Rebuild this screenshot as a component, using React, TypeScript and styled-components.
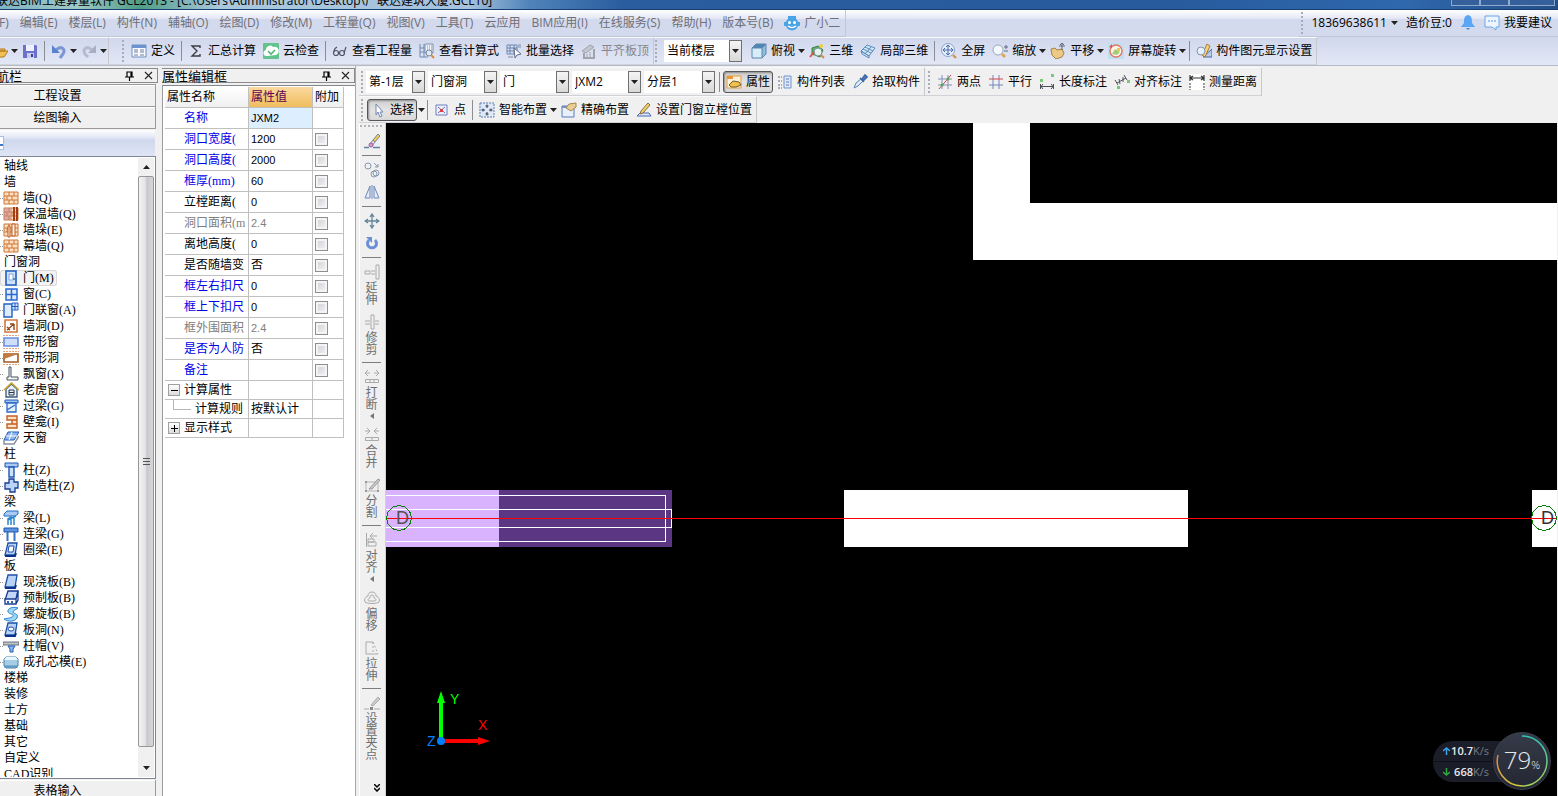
import React from 'react';
import styled, { createGlobalStyle, css } from 'styled-components';

const UI_FONT = '"Open Sans", "Noto Sans CJK SC", sans-serif';
const TREE_FONT = '"Liberation Serif", "Noto Sans CJK SC", serif';

const GlobalStyle = createGlobalStyle`
  *, *::before, *::after { box-sizing: border-box; }
  body { margin: 0; background: #f0f0f0; font: 12px/16px ${UI_FONT}; color: #000; overflow: hidden; }
  button { font: inherit; color: inherit; background: none; border: 0; padding: 0; margin: 0; white-space: nowrap; }
  svg { display: block; flex: none; }
`;

/* ---------- icons, all on a 16 x 16 grid ---------- */

const slab = (
  <>
    <path d="M5 1h9l-2 12H2z" fill="#b9d2f7" stroke="#1c4fa8" strokeWidth="1.3" />
    <path d="M2 14h10l1-3" fill="none" stroke="#0b3388" strokeWidth="2" />
  </>
);

const bricks = (
  <>
    <path d="M1 2h14v12H1z" fill="#fbe0c4" />
    <path d="M1 2h14v12H1zM1 6h14M1 10h14M6 2v4M11 2v4M4 6v4M9 6v4M6 10v4M11 10v4" fill="none" stroke="#cf7434" />
  </>
);

const ICONS: Record<string, React.ReactNode> = {
  open: <path d="M1 5h5l1 1h6v2H6l-3 6H1zM6 8h10l-4 6H3z" fill="#f3c056" stroke="#b27a1e" />,
  save: (
    <>
      <path d="M1 2h13l1 1v12H1z" fill="#6b72cc" />
      <path d="M4 2h8v6H4z" fill="#eef1fb" />
      <path d="M5 10h7v5H5z" fill="#c8cdea" />
      <path d="M9 11h2v3H9z" fill="#3b419b" />
    </>
  ),
  undo: (
    <>
      <path d="M5 7c5-5 10-1 7 4l-3 4" fill="none" stroke="#7d97d6" strokeWidth="3" />
      <path d="M1 2v8h8z" fill="#5b82cc" />
    </>
  ),
  redo: (
    <>
      <path d="M11 7C6 2 1 6 4 11l3 3" fill="none" stroke="#b5bccf" strokeWidth="3" />
      <path d="M15 2v8H7z" fill="#a7afc4" />
    </>
  ),
  define: (
    <>
      <path d="M1 2h14v12H1z" fill="#f7faff" stroke="#6d8fc0" />
      <path d="M1 2h14v3H1z" fill="#6a93cf" />
      <path d="M3 7h4M3 9h4M3 12h4M9 7h4M9 9h4M9 12h4" stroke="#6d7f9c" />
    </>
  ),
  sigma: <path d="M12 5V3H4l5 5-5 5h8v-2" fill="none" stroke="#3c3c44" strokeWidth="1.4" />,
  cloudCheck: (
    <>
      <rect width="16" height="16" rx="1" fill="#62c48c" />
      <path d="M4 13a3 3 0 0 1-1-6 4 4 0 0 1 7-3 4 4 0 0 1 3 8z" fill="#fff" />
      <path d="m5 8 3 3 4-4" fill="none" stroke="#4db57a" strokeWidth="1.6" />
    </>
  ),
  glasses: (
    <g fill="none" stroke="#4e5666" strokeWidth="1.2">
      <circle cx="4" cy="10" r="2.5" />
      <circle cx="10" cy="10" r="2.5" />
      <path d="M2 9c0-3 1-4 3-5M12 10l2-6" />
    </g>
  ),
  formula: (
    <>
      <path d="M1 1v13h8M1 5h4M1 9h4M5 1v13" fill="none" stroke="#6a86b5" />
      <path d="M6 1h8v9H6z" fill="#eef2fa" stroke="#7b8dab" />
      <path d="M8 3h5M8 5h5M8 7h5" stroke="#8293b5" strokeDasharray="1 1" />
      <circle cx="10" cy="10" r="3" fill="#dce9f8" stroke="#7d8794" />
      <path d="m12 12 3 3" stroke="#d88b3c" strokeWidth="2" />
    </>
  ),
  batch: (
    <>
      <path d="M1 2h10v9H1zM1 5h10M1 8h10M4 2v9M8 2v9" fill="none" stroke="#6b86b3" />
      <path d="M8 5l7 6-4 1-2 3z" fill="#fff" stroke="#5d6d89" />
      <path d="M12 2h3M12 4h3M2 14h5" stroke="#7f8ca3" />
    </>
  ),
  alignTop: (
    <>
      <path d="m1 8 8-6 4 2-8 6z" fill="#c3c6cd" stroke="#9fa3ab" />
      <path d="M3 10v5h10V6" fill="none" stroke="#9fa3ab" strokeWidth="2" />
      <path d="M6 11v3M9 9v5" stroke="#9fa3ab" />
    </>
  ),
  cube: (
    <>
      <path d="M1 5h10v10H1z" fill="#d9edf9" />
      <path d="m1 5 4-4h10l-4 4z" fill="#4f86b4" />
      <path d="m11 5 4-4v10l-4 4z" fill="#8fbddc" />
      <path d="M1 5h10v10H1zM1 5l4-4h10v10l-4 4M11 5l4-4" fill="none" stroke="#5b87ad" />
    </>
  ),
  view3d: (
    <>
      <path d="M3 5 9 3l5 4-3 7-8-3z" fill="#5fae62" stroke="#3c7f49" />
      <circle cx="12" cy="3" r="2" fill="#f1cf3a" />
      <circle cx="9" cy="9" r="4" fill="#e5f2ef" stroke="#6e9992" />
      <path d="m12 12 3 3" stroke="#d88a3e" strokeWidth="2" />
      <path d="m1 14 4-5" stroke="#d2594b" strokeWidth="2" />
    </>
  ),
  partial3d: (
    <>
      <path d="m1 8 6-6 8 3-6 8z" fill="#cfe4f5" stroke="#5b8cba" />
      <path d="m3 6 8 4M5 4l8 4M5 11l6-7M1 8l8 5v2l-7-4z" fill="none" stroke="#5b8cba" />
    </>
  ),
  fullscreen: (
    <>
      <circle cx="7" cy="7" r="6.500" fill="#e4edfa" stroke="#8ea4c8" />
      <path d="M7 2v10M2 7h10M5 4l2-2 2 2M5 10l2 2 2-2M4 5 2 7l2 2M10 5l2 2-2 2" fill="none" stroke="#4a6da5" />
      <path d="m12 12 3 3" stroke="#d79445" strokeWidth="2.4" />
    </>
  ),
  zoom: (
    <>
      <circle cx="6" cy="7" r="5" fill="#f4f8fd" stroke="#9aa6b8" />
      <path d="m10 11 3 3" stroke="#e0a54a" strokeWidth="2.6" />
      <path d="M12 4h4M14 2v4M12 8h4" stroke="#5b6a80" />
    </>
  ),
  hand: (
    <>
      <path d="M1 6l4-1 2 2 5-1 2 4-2 4-6 2-4-4z" fill="#ecc986" stroke="#a88343" />
      <path d="M12 0v7M9 3h6M10 2l2-2 2 2" fill="none" stroke="#5a6a80" />
    </>
  ),
  rotateView: (
    <>
      <path d="M0 0h16v16H0z" fill="#bfe0f0" />
      <circle cx="8" cy="8" r="6" fill="#fdf5e9" stroke="#e2766a" strokeWidth="1.4" />
      <path d="m4 11 3-5 5 3-3 3z" fill="#9fce75" />
      <path d="M9 5h3v3H9z" fill="#f0c64a" />
      <path d="M1 4l3-3v4z" fill="#e2564a" />
    </>
  ),
  display: (
    <>
      <path d="M7 14h9V6z" fill="#b8cbee" stroke="#4865a5" />
      <path d="m6 12 5-11 3 2-5 11z" fill="#f5d27a" stroke="#a97a35" />
      <circle cx="5" cy="8" r="4" fill="#e6f0fa" stroke="#8593a8" />
    </>
  ),
  attr: (
    <>
      <path d="M1 2h14v12H1z" fill="#fdf0d8" stroke="#e29a45" />
      <path d="M1 2h6v3H1z" fill="#e99a38" />
      <path d="m3 11 4-4 6 1 2 3-5 2H5z" fill="#f0c24c" stroke="#6f5a2c" />
    </>
  ),
  list: (
    <>
      <path d="M7 2h7v12H7z" fill="#dce8fa" stroke="#7592c8" />
      <path d="M9 5h3M9 8h3M9 11h3" stroke="#5b7fc0" />
      <path d="M1 3h4M1 7h4M1 11h4M1 14h4" stroke="#8b97ab" strokeDasharray="2 1" strokeWidth="1.500" />
    </>
  ),
  dropper: (
    <>
      <path d="m2 14 2-5 5-4 2 2-5 5z" fill="#dcebfa" stroke="#5e85b8" />
      <path d="m8 4 4 4M10 5l3-4 2 2-4 4z" fill="#5583c0" stroke="#3f6aa8" strokeWidth="1.600" />
    </>
  ),
  twoPoint: (
    <>
      <path d="M1 5h14M1 11h14M5 1v14M11 1v14" stroke="#8390bb" />
      <path d="M2 15 14 1" stroke="#c8424c" />
      <circle cx="5" cy="11" r="1.5" fill="#54a756" />
      <circle cx="11" cy="5" r="1.5" fill="#54a756" />
    </>
  ),
  parallel: (
    <>
      <path d="M5 1v14M11 1v14M1 11h14" stroke="#7585b8" />
      <path d="M1 5h14" stroke="#d4444c" />
    </>
  ),
  lengthDim: (
    <>
      <path d="M1 5h3v3H1zM12 0h3v3h-3z" fill="#79c77a" />
      <path d="M1.500 10v5M14.500 10v5M1 12.500h14M4 10l-2 2.500L4 15M12 10l2 2.500-2 2.500" fill="none" stroke="#4d5157" />
    </>
  ),
  alignDim: (
    <>
      <path d="m1 6 3 5M10 1l3 5M3 9l9-5M5 5l1 5M9 3v5" fill="none" stroke="#4d5157" />
      <path d="M3 12h3v3H3zM13 6h3v3h-3z" fill="#79c77a" />
    </>
  ),
  measure: (
    <>
      <path d="M0 0h16v16H0z" fill="#fff" />
      <path d="M1 1v6M15 1v6M1 4h14M4 2 1 4l3 2M12 2l3 2-3 2" fill="none" stroke="#333" strokeWidth="1.2" />
      <path d="M1 9v7M15 9v7" stroke="#333" strokeDasharray="2 1" />
    </>
  ),
  cursor: <path d="M6 2v11l2-3 2 5 2-1-2-4h3z" fill="#fff" stroke="#7189b2" />,
  point: (
    <>
      <path d="M2 3h11v10H2z" fill="#eef1fc" stroke="#6f7fc0" />
      <path d="m4 5 7 6M11 5l-7 6" stroke="#6a73b0" />
      <path d="M6 7h3v3H6z" fill="#d6434b" />
    </>
  ),
  smart: (
    <>
      <path d="M0 1h15v14H0z" fill="#dfe8f7" />
      <path d="M1 1h14v14H1z" fill="none" stroke="#5f7cae" strokeDasharray="2 1" />
      <path d="M8 2.500V6M8 10v3.500M2.500 8H6M10 8h3.500M6.500 4h3M6.500 12h3M4 6.500v3M12 6.500v3" stroke="#333c4d" />
    </>
  ),
  precise: (
    <>
      <path d="M1 4h12v11H1z" fill="#e8f0fc" stroke="#587bbd" />
      <path d="M1 4h12v2H1z" fill="#6f93d0" />
      <path d="m5 6 3-4 7-1v4l-5 4z" fill="#e9cd92" stroke="#a78950" />
    </>
  ),
  pencil: (
    <>
      <path d="M4 11h9l2 3H1z" fill="#dfe8fb" stroke="#4967b5" />
      <path d="m5 9 7-8 2 2-7 8-3 1z" fill="#f0d36d" stroke="#8e6a3b" />
    </>
  ),
  robot: (
    <>
      <circle cx="8" cy="9" r="6.5" fill="#4aa5e6" />
      <path d="M0 7h3v4H0zM13 7h3v4h-3zM4 1h8v3H4z" fill="#4aa5e6" />
      <circle cx="5.5" cy="7.5" r="1.5" fill="#fff" />
      <circle cx="10.500" cy="7.5" r="1.5" fill="#fff" />
      <path d="M4 11q4 3 8 0" fill="none" stroke="#fff" strokeWidth="1.4" />
    </>
  ),
  bell: (
    <>
      <path d="M8 0c4 1 4 4 4 8l3 4H1l3-4c0-4 0-7 4-8z" fill="#58a6f5" />
      <path d="M6 13h4l-2 2z" fill="#3f86d2" />
    </>
  ),
  chat: (
    <>
      <path d="M1 1h14v11h-3v3l-4-3H1z" fill="#eef5fe" stroke="#6aa6e6" />
      <path d="M4 6h8" stroke="#4c95e4" strokeDasharray="2 1" />
    </>
  ),
  brush: (
    <>
      <path d="m9 7 5-6 2 2-5 6z" fill="#f0cb55" stroke="#7c8796" />
      <path d="m6 11 3-4 2 2-3 4z" fill="#dbe3ee" stroke="#7c8796" />
      <circle cx="7" cy="12" r="2" fill="#d79bd0" stroke="#9c5f9c" />
      <path d="M0 14.500h5M9 14.500h7" stroke="#5d82a8" strokeWidth="1.500" />
    </>
  ),
  copy: (
    <g fill="none" stroke="#8598b2">
      <circle cx="4" cy="4" r="3" />
      <circle cx="10" cy="12" r="3" />
      <circle cx="12" cy="11" r="3" />
      <path d="m10 1 4 4M14 2v3h-3" />
    </g>
  ),
  mirror: <path d="M6 2v12H1zM10 2v12h5zM8 1v14" fill="#e3ebf8" stroke="#6d88bb" />,
  move: <path d="M8 1v14M1 8h14M6 4l2-3 2 3M6 12l2 3 2-3M4 6 1 8l3 2M12 6l3 2-3 2" fill="none" stroke="#64859a" strokeWidth="1.3" />,
  rotate: (
    <>
      <path d="M5 5a4.500 4.500 0 1 0 6 0" fill="none" stroke="#6b8fd6" strokeWidth="3" />
      <path d="M2 2h6v6z" fill="#6b8fd6" />
    </>
  ),
  extend: <path d="M12 1h3v14h-3zM1 7h5v3H1zM7 7h4M7 10h4" fill="none" stroke="#aaa" />,
  trim: <path d="M7 1h3v14H7zM1 7h5M1 10h5M11 7h4M11 10h4" fill="none" stroke="#aaa" />,
  split: <path d="M1.500 10.500h13v3h-13zM6 11v3M10 11v3M1 4h5M4 1 1 4l3 3M10 4h5M12 1l3 3-3 3" fill="none" stroke="#aaa" />,
  merge: <path d="M1.500 10.500h13v3h-13zM8 11v3M1 4h5M3 1l3 3-3 3M10 4h5M13 1l-3 3 3 3" fill="none" stroke="#aaa" />,
  cut: (
    <>
      <path d="M2 5h12v9H2z" fill="none" stroke="#b5b5b5" />
      <path d="M1 13h2v2H1zM13 13h2v2h-2zM1 4h2v2H1z" fill="#999" />
      <path d="m5 12 9-10 2 1-8 9z" fill="#ccc" stroke="#999" />
    </>
  ),
  align: <path d="M2.500 1v14M4 7h6v3H4zM4 10h8v4H4zM6 4h7M9 1 6 4l3 3" fill="none" stroke="#aaa" />,
  offset: (
    <g fill="none" stroke="#aaa">
      <path d="M8 2c3 0 4 2 4 4 3 1 4 3 3 6-2 2-12 2-14 0-1-3 0-5 3-6 0-2 1-4 4-4z" />
      <path d="M8 5c2 0 2 2 2 3 3 1 2 3 1 3H5c-1 0-2-2 1-3 0-1 0-3 2-3z" />
    </g>
  ),
  stretch: (
    <>
      <path d="M9 2H2v12h12" fill="none" stroke="#aaa" />
      <path d="m9 2 5 12M9 2v12" fill="none" stroke="#aaa" strokeDasharray="2 2" />
    </>
  ),
  grip: (
    <>
      <path d="m7 10 7-8 2 2-7 7z" fill="#ccc" stroke="#aaa" />
      <path d="M0 14h5M10 14h6" stroke="#aaa" />
      <path d="M6 12h3v3H6z" fill="#888" />
    </>
  ),
  wall: bricks,
  insulation: (
    <>
      {bricks}
      <path d="M1 2h8v12H1z" fill="#c9898a" fillOpacity=".6" />
      <path d="M11 1v14M14 1v14" stroke="#a33c12" strokeWidth="2" />
    </>
  ),
  pier: (
    <>
      {bricks}
      <path d="M5 4h2v11H5zM9 2h3v12H9z" fill="#fff5ea" stroke="#b85a20" />
    </>
  ),
  door: (
    <>
      <path d="M3 1h10v14H3z" fill="#cfe2fb" stroke="#1f5cc0" strokeWidth="1.6" />
      <path d="M6 4h4v6H6z" fill="#fff" stroke="#7fa5df" />
      <path d="M11 8v2" stroke="#123a86" />
    </>
  ),
  window: <path d="M3 3h11v11H3zM8.500 3v11M3 8.500h11" fill="#dcebfd" stroke="#2a69cf" strokeWidth="1.5" />,
  doorWindow: (
    <>
      <path d="M1 2h8v13H1z" fill="#dcebfd" stroke="#2460c4" strokeWidth="1.4" />
      <path d="M9 1h6v7H9zM12 1v7M9 4.500h6" fill="#cfe2fb" stroke="#2460c4" />
    </>
  ),
  wallHole: (
    <>
      <path d="M2 2h12v12H2z" fill="#fff" stroke="#d0793b" strokeWidth="1.6" />
      <path d="m4 12 7-6M11 6v6M7 6h4M4 9l3 3" fill="none" stroke="#8f4a1b" strokeWidth="1.4" />
    </>
  ),
  stripWindow: (
    <>
      <path d="M0 1.500h16M0 14.500h16" stroke="#e6a078" strokeDasharray="2 1" />
      <path d="M1 4h14v8H1z" fill="#cfdffb" stroke="#6a8fe0" strokeWidth="1.6" />
    </>
  ),
  stripHole: (
    <>
      <path d="M0 1.500h16M0 14.500h16" stroke="#e6a078" strokeDasharray="2 1" />
      <path d="M1 4h14v8H1z" fill="#fff" stroke="#a45a26" strokeWidth="1.6" />
      <path d="M1 4h14L1 9z" fill="#c27a42" />
    </>
  ),
  bay: <path d="M6 1h2v10h7v3H4v-3h2z" fill="#f2f5fa" stroke="#49505e" />,
  dormer: (
    <>
      <path d="M3 7v8h11V7L8.500 2z" fill="#e9f3fc" stroke="#3e5878" strokeWidth="1.3" />
      <path d="M1 8 8.500 1 16 8" fill="none" stroke="#c9a62f" strokeWidth="1.6" />
      <path d="M6 8h5v5H6zM6 10.500h5" fill="none" stroke="#26374d" />
    </>
  ),
  lintel: (
    <>
      <path d="M2 2h13v3H2z" fill="#9ec2f2" stroke="#1f5bb8" />
      <path d="M4 5h9v9H4zM4 12l8-5" fill="#e3effd" stroke="#2b69c6" strokeWidth="1.3" />
    </>
  ),
  niche: <path d="M4 2h10v12H4v-4h5V6H4zM9 6h5M9 10h5" fill="#fbe0c4" stroke="#c15f21" strokeWidth="1.4" />,
  skylight: (
    <>
      <path d="M5 2h11l-5 8H1z" fill="#8fb7ee" stroke="#1f5bb8" />
      <path d="M3 6h11M9 2 6 10" stroke="#fff" />
      <path d="M1 10v4h10l5-8" fill="none" stroke="#8a929e" strokeWidth="1.5" />
    </>
  ),
  column: (
    <>
      <path d="M2 1h13v4H2z" fill="#a9caf5" stroke="#1c57b4" />
      <path d="M6 5h5v10H6z" fill="#cfe1fa" stroke="#1c57b4" strokeWidth="1.4" />
    </>
  ),
  structColumn: <path d="M6 1h5v3h4v6h-3v4H7v-3H2V5h4z" fill="#bcd4f8" stroke="#173f91" strokeWidth="1.3" />,
  beam: (
    <>
      <path d="M1 4 4 1h11v3l-3 2H1z" fill="#a9caf5" stroke="#1f6cc0" />
      <path d="M5 15V9l3-2v8M11 15V6M5 10l8-4" fill="none" stroke="#2b86cf" strokeWidth="1.5" />
    </>
  ),
  linkBeam: (
    <>
      <path d="M1 2h14v4H1z" fill="#5d93de" stroke="#1f57ae" />
      <path d="M4.500 6v9M11.500 6v9" stroke="#3b72c4" strokeWidth="2" />
    </>
  ),
  ringBeam: (
    <>
      {slab}
      <path d="M6 4h5l-1 6H5z" fill="#fff" stroke="#1c4fa8" />
    </>
  ),
  slab,
  precast: (
    <>
      <path d="M5 1h10l-2 9H2z" fill="#c3d6f6" stroke="#1a3b92" strokeWidth="1.3" />
      <path d="M2 9h11v5H2zM13 9l2-8v9l-2 4" fill="#fff" stroke="#1a3b92" strokeWidth="1.3" />
      <path d="M4 11h2v2H4zM8 11h2v2H8z" fill="#2b5cc0" />
    </>
  ),
  spiral: <path d="M15 2C9 0 4 3 5 6c1 2 6 2 5 4s-5 2-9 3c4 3 11 3 13-1 2-5-4-4-4-6 0-1 2-2 5-4z" fill="#9fd4f5" stroke="#2b84cf" />,
  slabHole: (
    <>
      {slab}
      <ellipse cx="8" cy="7" rx="3" ry="2" fill="#fff" stroke="#1c4fa8" />
    </>
  ),
  cap: (
    <>
      <path d="M0 4h16v3H0z" fill="#bfc3c9" stroke="#6b7078" />
      <path d="M5 8h7l-2 3v3H7v-3z" fill="#8fb7ee" stroke="#1f5bb8" />
    </>
  ),
  coreMold: (
    <>
      <path d="M3 3h10l2 2v7l-2 2H3l-2-2V5z" fill="#a5cde6" stroke="#487fa6" />
      <path d="M3 3h10l2 3H1z" fill="#e8f5fc" />
      <path d="M1 12.500h14" stroke="#5f97bd" strokeWidth="2" />
    </>
  ),
};

const Icon = ({ name }: { name: string }) => (
  <svg width="16" height="16" viewBox="0 0 16 16" aria-hidden="true">{ICONS[name]}</svg>
);

const DownArrow = () => (
  <svg width="7" height="4" viewBox="0 0 7 4" aria-hidden="true"><path d="M0 0h7L3.500 4z" fill="#222" /></svg>
);

/* ---------- frame ---------- */

const Shell = styled.div`
  display: flex;
  flex-direction: column;
  height: 100vh;
  overflow: hidden;
`;

const TitleBar = styled.header`
  display: flex;
  align-items: flex-end;
  justify-content: space-between;
  height: 10px;
  flex: none;
  overflow: hidden;
  white-space: pre;
  border-bottom: 1px solid #163f74;
  background: linear-gradient(90deg, #7fb3c4 0, #9fc9c4 5%, #4f9c86 9%, #a9c7dc 14%, #a7c3dd 30%, #4f83b9 34%, #2a5d9f 40%, #275b9e 75%, #2f68ad 90%, #244f88 100%);
`;

const TitleText = styled.span`
  margin-left: -4px;
  line-height: 16px;
`;

const WindowButtons = styled.div`
  display: flex;
  flex: none;
  margin-right: 3px;
`;

const WindowButton = styled.button<{ $wide?: boolean }>`
  width: ${p => (p.$wide ? 46 : 29)}px;
  height: 6px;
  margin-bottom: 3px;
  border: 1px solid #8fa9cc;
  border-top: 0;
  background: #35609b;
`;

const MenuRow = styled.div`
  display: flex;
  justify-content: space-between;
  height: 27px;
  flex: none;
  background: linear-gradient(#fff 0, #e2e6f4 9px, #d3daee 9px, #d3daee 100%);
`;

const MenuBar = styled.nav`
  display: flex;
  align-items: center;
  gap: 11px;
  padding: 0 5px 0 0;
  margin-left: -1px;
  border-right: 1px solid #c2c8d8;
  border-bottom: 1px solid #c2c8d8;
  color: #6f6f76;
`;

const MenuItem = styled.button`
  display: flex;
  align-items: center;
  gap: 4px;
  line-height: 20px;
`;

const Account = styled.div`
  display: flex;
  align-items: center;
  gap: 8px;
  padding: 0 6px 0 2px;
  border-bottom: 1px solid #c2c8d8;
`;

const Grip = styled.span<{ $flat?: boolean }>`
  flex: none;
  ${p => (p.$flat
    ? css`width: 24px; height: 2px; background: repeating-linear-gradient(90deg, #b4b4b8 0 2px, transparent 2px 4px);`
    : css`width: 2px; height: 22px; background: repeating-linear-gradient(#a9adb8 0 2px, transparent 2px 4px);`)}
`;

const ToolRow = styled.div<{ $tone?: 'blue'; $height: number }>`
  display: flex;
  flex: none;
  height: ${p => p.$height}px;
  ${p => p.$tone === 'blue' && css`
    background: linear-gradient(#d0d7ec, #e3e8f6);
    border-bottom: 1px solid #b4bccb;
  `}
`;

const Toolbar = styled.div<{ $gap?: number; $start?: number }>`
  display: flex;
  align-items: center;
  flex: none;
  gap: ${p => p.$gap ?? 7}px;
  padding: 0 4px 0 ${p => p.$start ?? 1}px;
  border-top: 1px solid #fafafc;
  border-right: 1px solid #c6c8ce;
  border-bottom: 1px solid #d0d2d8;
`;

const ToolGroup = styled.div`
  display: flex;
  align-items: center;
  gap: 7px;
  margin-left: 2px;
`;

const ToolButton = styled.button<{ $arrow?: boolean; $pressed?: boolean; $muted?: boolean }>`
  display: flex;
  align-items: center;
  gap: 4px;
  height: 22px;
  flex: none;
  ${p => p.$arrow && css`margin-right: -3px; & > svg:last-child { margin-left: -1px; }`}
  ${p => p.$muted && css`color: #85868d;`}
  ${p => p.$pressed && css`
    padding: 0 2px;
    margin: 0 -3px;
    border: 1px solid #55565a;
    border-radius: 3px;
    background: linear-gradient(#cfcfcf, #e3e3e3 50%, #dadada);
    box-shadow: inset 1px 1px 2px #8d8d8d;
  `}
`;

const DropButton = styled.button`
  height: 22px;
  margin: 0 -4px 0 -3px;
`;

const Sep = styled.span`
  flex: none;
  width: 1px;
  height: 20px;
  margin: 0 -1px;
  background: #8b8d94;
`;

const Picker = styled.label<{ $width: number }>`
  display: flex;
  flex: none;
  width: ${p => p.$width}px;
  height: 22px;
  background: #fff;

  select {
    flex: 1;
    min-width: 0;
    appearance: none;
    border: 0;
    padding: 0 0 0 3px;
    background: none;
    font: inherit;
    color: #000;
  }
`;

const PickerArrow = styled.span`
  display: flex;
  align-items: center;
  justify-content: center;
  width: 13px;
  border: 1px solid #707070;
  background: linear-gradient(#f4f4f4, #d8d8d8);
`;

const Choice = ({ value, width, label }: { value: string; width: number; label: string }) => (
  <Picker $width={width}>
    <select aria-label={label} defaultValue={value}><option>{value}</option></select>
    <PickerArrow><DownArrow /></PickerArrow>
  </Picker>
);

type ToolProps = { icon: string; label?: string; arrow?: boolean; muted?: boolean; pressed?: boolean };
const Tool = ({ icon, label, arrow, muted, pressed }: ToolProps) => (
  <ToolButton type="button" $arrow={arrow} $muted={muted} $pressed={pressed} aria-label={label ?? icon}>
    <Icon name={icon} />
    {label}
    {arrow && <DownArrow />}
  </ToolButton>
);

/* ---------- docked panels ---------- */

const Body = styled.div`
  display: grid;
  grid-template-columns: 158px 198px minmax(0, 1fr);
  grid-template-rows: minmax(0, 1fr);
  flex: 1;
  min-height: 0;
`;

const Dock = styled.section<{ $inset?: boolean }>`
  display: flex;
  flex-direction: column;
  min-height: 0;
  padding: 2px 0 0 ${p => (p.$inset ? 4 : 0)}px;
  overflow: hidden;
  ${p => p.$inset && css`border-right: 1px solid #a6a6ac;`}
`;

const DockHeader = styled.div`
  display: flex;
  align-items: center;
  flex: none;
  height: 15px;
  border: 1px solid #8a8a8a;
  border-left: 0;
  font-size: 13px;
  gap: 10px;
  padding-right: 4px;
  white-space: nowrap;

  h2 { flex: 1; margin: 0; font: inherit; }
`;

const ClippedTitle = styled.h2`
  text-indent: -4px;
`;

const PanelButtons = () => (
  <>
    <button type="button" aria-label="固定">
      <svg width="9" height="10" viewBox="0 0 9 10"><path d="M2 1h5v5H2zM6 1v5M0 6h9M4.500 6v4" fill="none" stroke="#000" strokeWidth="1.2" /></svg>
    </button>
    <button type="button" aria-label="关闭">
      <svg width="9" height="9" viewBox="0 0 9 9"><path d="m1 1 7 7M8 1 1 8" stroke="#222" strokeWidth="1.100" /></svg>
    </button>
  </>
);

const NavButton = styled.button`
  flex: none;
  width: 156px;
  height: 22px;
  padding-right: 40px;
  border: 1px solid #9b9b9b;
  border-width: 0 1px 1px 0;
  box-shadow: inset 0 1px #fff;
  text-align: center;
`;

const NavTop = styled.div`
  display: flex;
  flex-direction: column;
  flex: none;
  width: 156px;
  margin-top: 1px;
  border-top: 1px solid #9b9b9b;
`;

const NavStrip = styled.div`
  display: flex;
  align-items: center;
  flex: none;
  width: 155px;
  height: 26px;
  margin-top: 1px;
  background: linear-gradient(#fff 0, #dfe5f4 8px, #d0d8ed 10px, #dfe5f5 100%);

  &::before { content: ''; width: 4px; height: 14px; border: 1px solid #a8bde3; border-left: 0; background: linear-gradient(#fff 7px, #3d79c4 7px 9px, #fff 9px); }
`;

const TreeBox = styled.div`
  display: flex;
  flex: 1;
  min-height: 0;
  width: 156px;
  border: 1px solid #7f8694;
  border-width: 1px 1px 1px 0;
  background: #fff;
`;

const Tree = styled.ul`
  flex: 1;
  min-width: 0;
  margin: 1px 0;
  padding: 0;
  list-style: none;
  overflow: hidden;
  font-family: ${TREE_FONT};
`;

const TreeRow = styled.li<{ $leaf?: boolean; $active?: boolean }>`
  display: flex;
  align-items: center;
  height: 16px;
  padding-left: ${p => (p.$leaf ? 3 : 4)}px;
  white-space: nowrap;

  button { display: flex; align-items: center; gap: 4px; height: 16px; line-height: 17px; }
  ${p => p.$leaf && css`background: linear-gradient(90deg, #999 1px, transparent 1px 2px, #999 2px 3px, transparent 3px) 0 8px / 3px 1px no-repeat;`}
  ${p => p.$active && css`
    width: 57px;
    border-radius: 3px;
    background: #f3f3f3;
    box-shadow: inset 0 0 0 1px #d8d8d8;
  `}
`;

const ScrollBar = styled.div`
  display: flex;
  flex-direction: column;
  flex: none;
  width: 16px;
  margin: 1px 1px 1px 0;
  background: #f0f0f0;
`;

const ScrollButton = styled.button<{ $down?: boolean }>`
  display: grid;
  place-items: center;
  height: 18px;
  ${p => p.$down && css`margin-top: 12px;`}
  svg { transform: ${p => (p.$down ? 'none' : 'rotate(180deg)')}; }
`;

const Thumb = styled.div`
  display: grid;
  place-items: center;
  flex: 1;
  border: 1px solid #979797;
  border-radius: 2px;
  background: linear-gradient(90deg, #f3f3f3, #e4e4e6 45%, #c9c9cd 55%, #d6d6da);

  &::before { content: ''; width: 7px; height: 8px; background: repeating-linear-gradient(#555 0 1px, transparent 1px 3px); }
`;

const FooterButton = styled(NavButton)`
  margin-top: 1px;
  margin-bottom: -6px;
`;

const TREE: [string, string?][] = [
  ['轴线'], ['墙'], ['墙(Q)', 'wall'], ['保温墙(Q)', 'insulation'], ['墙垛(E)', 'pier'], ['幕墙(Q)', 'wall'],
  ['门窗洞'], ['门(M)', 'door'], ['窗(C)', 'window'], ['门联窗(A)', 'doorWindow'], ['墙洞(D)', 'wallHole'],
  ['带形窗', 'stripWindow'], ['带形洞', 'stripHole'], ['飘窗(X)', 'bay'], ['老虎窗', 'dormer'], ['过梁(G)', 'lintel'],
  ['壁龛(I)', 'niche'], ['天窗', 'skylight'], ['柱'], ['柱(Z)', 'column'], ['构造柱(Z)', 'structColumn'],
  ['梁'], ['梁(L)', 'beam'], ['连梁(G)', 'linkBeam'], ['圈梁(E)', 'ringBeam'], ['板'], ['现浇板(B)', 'slab'],
  ['预制板(B)', 'precast'], ['螺旋板(B)', 'spiral'], ['板洞(N)', 'slabHole'], ['柱帽(V)', 'cap'],
  ['成孔芯模(E)', 'coreMold'], ['楼梯'], ['装修'], ['土方'], ['基础'], ['其它'], ['自定义'], ['CAD识别'],
];

const PropBody = styled.div`
  flex: 1;
  width: 193px;
  margin-top: 2px;
  padding: 1px 0 0 2px;
  border-top: 1px solid #83868c;
  border-left: 1px solid #9b9b9b;
  background: #fff;
`;

const PropTable = styled.table`
  width: 179px;
  table-layout: fixed;
  border-collapse: separate;
  border-spacing: 0;
  font-family: ${TREE_FONT};

  th, td {
    height: 21px;
    padding: 0 0 0 2px;
    border-right: 1px solid #c0c0c0;
    border-bottom: 1px solid #c0c0c0;
    overflow: hidden;
    white-space: nowrap;
    text-align: left;
    font-weight: 400;
    line-height: 16px;
  }
  thead th { background: linear-gradient(#fff, #f0f0f0); }
  thead th:nth-child(2) { background: linear-gradient(#fbd9a0, #f0bd5c); color: #600050; }
`;

const PropRow = styled.tr<{ $tone?: string; $short?: boolean; $indent?: boolean }>`
  && th { padding-left: ${p => (p.$short ? 3 : 19)}px; color: ${p => (p.$tone === 'gray' ? '#808080' : p.$tone === 'blue' ? '#0000e6' : '#000')}; }
  && td { color: ${p => (p.$tone === 'gray' ? '#808080' : '#000')}; }
  ${p => p.$short && css`&& th, && td { height: 19px; }`}
  ${p => p.$indent && css`&& th { padding-left: 8px; }`}
`;

const ValueCell = styled.td<{ $active?: boolean; $latin?: boolean }>`
  ${p => p.$active && css`background: #ddeeff;`}
  ${p => p.$latin && css`font-family: "Liberation Sans", sans-serif; font-size: 11px;`}
`;

const TreeCell = styled.span`
  display: flex;
  align-items: center;
  gap: 4px;
`;

const Branch = styled.span`
  width: 18px;
  height: 10px;
  margin-top: -9px;
  border: 1px solid #b5b5b5;
  border-width: 0 0 1px 1px;
`;

const Expander = styled.button`
  display: grid;
  place-items: center;
  width: 12px;
  height: 12px;
  border: 1px solid #a0a0a0;
  background: linear-gradient(#fff, #dcdcdc);
`;

const Tick = styled.input.attrs({ type: 'checkbox' })`
  display: block;
  appearance: none;
  width: 13px;
  height: 13px;
  margin: 1px 0 0;
  border: 1px solid #8e8f8f;
  background: linear-gradient(135deg, #cbcfd5, #f6f6f6);
  box-shadow: inset 0 0 0 2px #f4f4f4;
`;

const PROPS: [string, string, string][] = [
  ['洞口宽度(', '1200', 'blue'], ['洞口高度(', '2000', 'blue'], ['框厚(mm)', '60', 'blue'],
  ['立樘距离(', '0', ''], ['洞口面积(m', '2.4', 'gray'], ['离地高度(', '0', ''], ['是否随墙变', '否', ''],
  ['框左右扣尺', '0', 'blue'], ['框上下扣尺', '0', 'blue'], ['框外围面积', '2.4', 'gray'],
  ['是否为人防', '否', 'blue'], ['备注', '', 'blue'],
];

/* ---------- drawing area ---------- */

const Main = styled.main`
  display: flex;
  flex-direction: column;
  min-width: 0;
  min-height: 0;
  padding: 1px 1px 0 3px;
`;

const Work = styled.div`
  display: flex;
  flex: 1;
  min-height: 0;
`;

const SideTools = styled.div`
  display: flex;
  flex-direction: column;
  align-items: center;
  flex: none;
  gap: 6px;
  width: 27px;
  padding: 2px 2px 4px 0;
  border-left: 1px solid #fff;
  border-right: 1px solid #d0d0d0;
`;

const SideGroup = styled.div<{ $gap: number }>`
  display: flex;
  flex-direction: column;
  gap: ${p => p.$gap}px;
`;

const SideButton = styled.button`
  display: flex;
  flex-direction: column;
  align-items: center;
  gap: 2px;
  width: 24px;
  color: #6e6e6e;
  font-size: 12px;
  line-height: 12px;
`;

const SideLabel = styled.span`
  width: 12px;
  white-space: normal;
  word-break: break-all;
`;

const SideSep = styled.span`
  width: 19px;
  height: 1px;
  flex: none;
  background: #7d7d7d;
`;

const More = styled.button`
  margin: auto 0 0 10px;
`;

const SideTool = ({ icon, label, arrow }: { icon: string; label?: string; arrow?: boolean }) => (
  <SideButton type="button" aria-label={label ?? icon}>
    <Icon name={icon} />
    {label && <SideLabel>{label}</SideLabel>}
    {arrow && <svg width="4" height="6" viewBox="0 0 4 6"><path d="M4 0v6L0 3z" fill="#777" /></svg>}
  </SideButton>
);

const CanvasArea = styled.div`
  position: relative;
  flex: 1;
  min-width: 0;
  overflow: hidden;
  background: #000;
`;

const Marker = ({ x, y, fill }: { x: number; y: number; fill: string }) => (
  <>
    <polygon
      points={Array.from({ length: 12 }, (_, i) => {
        const a = (i * Math.PI) / 6;
        return `${x + 12.5 * Math.cos(a)},${y + 12.5 * Math.sin(a)}`;
      }).join(' ')}
      fill="none" stroke="#0a7d0a" shapeRendering="crispEdges"
    />
    <text x={x - 3} y={y + 6} fontFamily="Liberation Sans, sans-serif" fontSize="18" fill={fill}>D</text>
  </>
);

const Drawing = () => (
  <svg width="100%" height="100%" aria-label="绘图区">
    <g shapeRendering="crispEdges">
      <rect x="587" y="0" width="57" height="137" fill="#fff" />
      <rect x="644" y="80" width="100%" height="57" fill="#fff" />
      <rect x="458" y="367" width="344" height="57" fill="#fff" />
      <rect x="1146" y="367" width="26" height="57" fill="#fff" />
      <rect x="0" y="367" width="113" height="57" fill="#dab3ff" />
      <rect x="113" y="367" width="173" height="57" fill="#5b3683" />
      <path d="M0 372.5h279.500v46H0M0 386.500h285.500v18H0" fill="none" stroke="#fff" />
      <rect x="0" y="395" width="100%" height="1" fill="#f00" />
    </g>
    <Marker x={13} y={395} fill="#55504f" />
    <Marker x={1158} y={395} fill="#333" />
    <g fontFamily="Liberation Sans, sans-serif" fontSize="14">
      <path d="M55 618v-39" stroke="#0f0" strokeWidth="4" />
      <path d="m55 568 4 12h-8z" fill="#0f0" />
      <path d="M55 618h40" stroke="#f00" strokeWidth="4" />
      <path d="m104 618-12-4v8z" fill="#f00" />
      <circle cx="55" cy="618" r="4" fill="#0080ff" />
      <text x="64" y="581" fill="#0f0">Y</text>
      <text x="92" y="607" fill="#f00">X</text>
      <text x="41" y="623" fill="#0080ff">Z</text>
    </g>
  </svg>
);

/* floating network and memory meter, lies over the drawing */
const Meter = styled.aside`
  position: absolute;
  right: 6px;
  bottom: 6px;
  display: flex;
  align-items: center;
  color: #e8e8ec;
`;

const Rates = styled.div`
  width: 84px;
  margin-right: -24px;
  border-radius: 20px 0 0 20px;
  background: #1b1e29;
  overflow: hidden;
`;

const Rate = styled.div`
  display: flex;
  align-items: center;
  height: 20px;
  padding-right: 28px;
  justify-content: flex-end;
  font-size: 11px;
  font-weight: 600;

  & + & { border-top: 1px solid #10121a; height: 21px; }
  span { color: #777b86; font-weight: 400; }
  svg { margin-right: auto; margin-left: 10px; }
`;

const Dial = styled.div`
  position: relative;
  display: flex;
  align-items: baseline;
  justify-content: center;
  width: 58px;
  height: 58px;
  border: 1px solid #3c404d;
  border-radius: 50%;
  background: linear-gradient(#363b49, #232733);
  font: 300 24px/54px "Open Sans", sans-serif;

  small { font-size: 11px; }
  svg { position: absolute; inset: 0; }
`;

export default function App() {
  return (
    <Shell>
      <GlobalStyle />
      <TitleBar>
        <TitleText>{'联达BIM土建算量软件 GCL2013 - [C:\\Users\\Administrator\\Desktop\\广联达建筑大厦.GCL10]'}</TitleText>
        <WindowButtons>
          <WindowButton type="button" aria-label="最小化" />
          <WindowButton type="button" aria-label="最大化" />
          <WindowButton type="button" aria-label="关闭窗口" $wide />
        </WindowButtons>
      </TitleBar>

      <MenuRow>
        <MenuBar>
          {['F)', '编辑(E)', '楼层(L)', '构件(N)', '辅轴(O)', '绘图(D)', '修改(M)', '工程量(Q)', '视图(V)', '工具(T)', '云应用', 'BIM应用(I)', '在线服务(S)', '帮助(H)', '版本号(B)'].map(m => (
            <MenuItem type="button" key={m}>{m}</MenuItem>
          ))}
          <MenuItem type="button"><Icon name="robot" />广小二</MenuItem>
        </MenuBar>
        <Account>
          <Grip />
          <MenuItem type="button">18369638611 <DownArrow /></MenuItem>
          <span>造价豆:0</span>
          <MenuItem type="button" aria-label="消息"><Icon name="bell" /></MenuItem>
          <MenuItem type="button"><Icon name="chat" />我要建议</MenuItem>
        </Account>
      </MenuRow>

      <ToolRow $tone="blue" $height={29}>
        <Toolbar $start={0}>
          <ToolButton type="button" $arrow aria-label="打开">
            <svg width="8" height="16" viewBox="8 0 8 16">{ICONS.open}</svg>
            <DownArrow />
          </ToolButton>
          <Tool icon="save" />
          <Sep />
          <Tool icon="undo" arrow />
          <Tool icon="redo" arrow />
        </Toolbar>
        <Toolbar $start={13}>
          <Grip />
          <Tool icon="define" label="定义" />
          <Sep />
          <Tool icon="sigma" label="汇总计算" />
          <Tool icon="cloudCheck" label="云检查" />
          <Sep />
          <Tool icon="glasses" label="查看工程量" />
          <Tool icon="formula" label="查看计算式" />
          <Tool icon="batch" label="批量选择" />
          <Tool icon="alignTop" label="平齐板顶" muted />
        </Toolbar>
        <Toolbar $start={1}>
          <Grip />
          <Choice value="当前楼层" width={78} label="楼层范围" />
          <ToolGroup style={undefined}>
            <Tool icon="cube" label="俯视" arrow />
          </ToolGroup>
          <Tool icon="view3d" label="三维" />
          <Tool icon="partial3d" label="局部三维" />
          <Sep />
          <Tool icon="fullscreen" label="全屏" />
          <Tool icon="zoom" label="缩放" arrow />
          <Tool icon="hand" label="平移" arrow />
          <Tool icon="rotateView" label="屏幕旋转" arrow />
          <Sep />
          <Tool icon="display" label="构件图元显示设置" />
        </Toolbar>
      </ToolRow>

      <Body>
        <Dock>
          <DockHeader><ClippedTitle>航栏</ClippedTitle><PanelButtons /></DockHeader>
          <NavTop>
            <NavButton type="button">工程设置</NavButton>
            <NavButton type="button">绘图输入</NavButton>
          </NavTop>
          <NavStrip />
          <TreeBox>
            <Tree>
              {TREE.map(([label, icon]) => (
                <TreeRow key={label} $leaf={!!icon} $active={icon === 'door'}>
                  <button type="button">{icon && <Icon name={icon} />}{label}</button>
                </TreeRow>
              ))}
            </Tree>
            <ScrollBar>
              <ScrollButton type="button" aria-label="向上"><DownArrow /></ScrollButton>
              <Thumb />
              <ScrollButton type="button" aria-label="向下" $down><DownArrow /></ScrollButton>
            </ScrollBar>
          </TreeBox>
          <FooterButton type="button">表格输入</FooterButton>
        </Dock>

        <Dock $inset>
          <DockHeader><h2>属性编辑框</h2><PanelButtons /></DockHeader>
          <PropBody>
            <PropTable>
              <colgroup><col width="84" /><col width="64" /><col width="31" /></colgroup>
              <thead><tr><th>属性名称</th><th>属性值</th><th>附加</th></tr></thead>
              <tbody>
                <PropRow $tone="blue"><th scope="row">名称</th><ValueCell $active $latin>JXM2</ValueCell><td /></PropRow>
                {PROPS.map(([name, value, tone]) => (
                  <PropRow key={name} $tone={tone}>
                    <th scope="row">{name}</th>
                    <ValueCell $latin={value !== '否'}>{value}</ValueCell>
                    <td><Tick aria-label={`${name} 附加`} /></td>
                  </PropRow>
                ))}
                <PropRow $short>
                  <th scope="row">
                    <TreeCell>
                      <Expander type="button" aria-label="收起">
                        <svg width="7" height="7"><path d="M0 3.500h7" stroke="#000" /></svg>
                      </Expander>
                      计算属性
                    </TreeCell>
                  </th>
                  <td /><td />
                </PropRow>
                <PropRow $short $indent>
                  <th scope="row"><TreeCell><Branch />计算规则</TreeCell></th>
                  <ValueCell>按默认计</ValueCell><td />
                </PropRow>
                <PropRow $short>
                  <th scope="row">
                    <TreeCell>
                      <Expander type="button" aria-label="展开">
                        <svg width="7" height="7"><path d="M0 3.500h7M3.500 0v7" stroke="#000" /></svg>
                      </Expander>
                      显示样式
                    </TreeCell>
                  </th>
                  <td /><td />
                </PropRow>
              </tbody>
            </PropTable>
          </PropBody>
        </Dock>

        <Main>
          <ToolRow $height={29}>
            <Toolbar $gap={3} $start={2}>
              <Grip />
              <Choice value="第-1层" width={59} label="楼层" />
              <Choice value="门窗洞" width={69} label="构件类型" />
              <Choice value="门" width={69} label="构件" />
              <Choice value="JXM2" width={69} label="名称" />
              <Choice value="分层1" width={71} label="分层" />
              <ToolGroup>
                <Sep />
                <Tool icon="attr" label="属性" pressed />
                <Tool icon="list" label="构件列表" />
                <Tool icon="dropper" label="拾取构件" />
              </ToolGroup>
            </Toolbar>
            <Toolbar $start={3}>
              <Grip />
              <Tool icon="twoPoint" label="两点" />
              <Tool icon="parallel" label="平行" />
              <Tool icon="lengthDim" label="长度标注" />
              <Tool icon="alignDim" label="对齐标注" />
              <Tool icon="measure" label="测量距离" />
            </Toolbar>
          </ToolRow>
          <ToolRow $height={27}>
            <Toolbar $start={2}>
              <Grip />
              <Tool icon="cursor" label="选择" pressed />
              <DropButton type="button" aria-label="选择方式"><DownArrow /></DropButton>
              <Sep />
              <Tool icon="point" label="点" />
              <Sep />
              <Tool icon="smart" label="智能布置" arrow />
              <Tool icon="precise" label="精确布置" />
              <Tool icon="pencil" label="设置门窗立樘位置" />
            </Toolbar>
          </ToolRow>
          <Work>
            <SideTools>
              <Grip $flat />
              <SideTool icon="brush" />
              <SideSep />
              <SideGroup $gap={6}><SideTool icon="copy" /><SideTool icon="mirror" /></SideGroup>
              <SideSep />
              <SideGroup $gap={6}><SideTool icon="move" /><SideTool icon="rotate" /></SideGroup>
              <SideSep />
              <SideGroup $gap={8}><SideTool icon="extend" label="延伸" /><SideTool icon="trim" label="修剪" /></SideGroup>
              <SideSep />
              <SideGroup $gap={8}>
                <SideTool icon="split" label="打断" arrow />
                <SideTool icon="merge" label="合并" />
                <SideTool icon="cut" label="分割" />
              </SideGroup>
              <SideSep />
              <SideGroup $gap={8}>
                <SideTool icon="align" label="对齐" arrow />
                <SideTool icon="offset" label="偏移" />
                <SideTool icon="stretch" label="拉伸" />
              </SideGroup>
              <SideSep />
              <SideTool icon="grip" label="设置夹点" />
              <More type="button" aria-label="更多">
                <svg width="6" height="8" viewBox="0 0 6 8"><path d="m0 0 3 3 3-3M0 4l3 3 3-3" fill="none" stroke="#000" strokeWidth="1.500" /></svg>
              </More>
            </SideTools>
            <CanvasArea>
              <Drawing />
              <Meter>
                <Rates>
                  <Rate>
                    <svg width="7" height="8" viewBox="0 0 7 8"><path d="M3.500 8V1M0 4l3.500-3L7 4" fill="none" stroke="#3aa0e8" strokeWidth="1.500" /></svg>
                    10.7<span>K/s</span>
                  </Rate>
                  <Rate>
                    <svg width="7" height="8" viewBox="0 0 7 8"><path d="M3.500 0v7M0 4l3.500 3L7 4" fill="none" stroke="#2fa83a" strokeWidth="1.500" /></svg>
                    668<span>K/s</span>
                  </Rate>
                </Rates>
                <Dial>
                  79<small>%</small>
                  <svg width="56" height="56" viewBox="0 0 56 56" fill="none" strokeWidth="1.500">
                    <defs>
                      <linearGradient id="ringRight" x1="0" y1="0" x2="0" y2="1"><stop stopColor="#2fc6b6" /><stop offset="1" stopColor="#a9cf55" /></linearGradient>
                      <linearGradient id="ringLeft" x1="0" y1="0" x2="0" y2="1"><stop stopColor="#e8794a" /><stop offset="1" stopColor="#d8c83c" /></linearGradient>
                    </defs>
                    <path d="M28 3a25 25 0 0 1 0 50" stroke="url(#ringRight)" />
                    <path d="M28 53A25 25 0 0 1 4 22" stroke="url(#ringLeft)" />
                  </svg>
                </Dial>
              </Meter>
            </CanvasArea>
          </Work>
        </Main>
      </Body>
    </Shell>
  );
}
